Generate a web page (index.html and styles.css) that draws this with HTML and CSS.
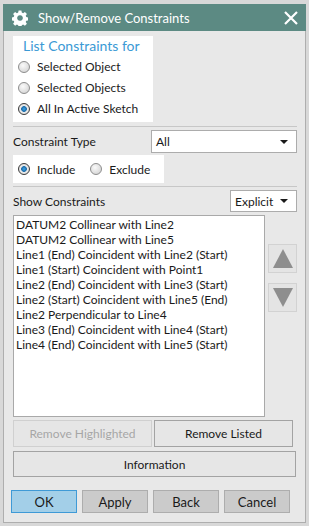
FILE: index.html
```html
<!DOCTYPE html>
<html>
<head lang="en">
    <meta charset="UTF-8">
    <title>Show/Remove Constraints</title>
    <link rel="stylesheet" href="styles.css">
</head>
<body>
<div class="frame">
    <div class="titlebar">
        <svg class="gear" width="16" height="16" viewBox="0 0 16 16">
            <path fill="#fff" fill-rule="evenodd" d="M6.6 0.5h2.8l0.4 2.1 1.3 0.6 1.8-1.2 2 2-1.2 1.8 0.6 1.3 2.1 0.4v2.8l-2.1 0.4-0.6 1.3 1.2 1.8-2 2-1.8-1.2-1.3 0.6-0.4 2.1h-2.8l-0.4-2.1-1.3-0.6-1.8 1.2-2-2 1.2-1.8-0.6-1.3-2.1-0.4v-2.8l2.1-0.4 0.6-1.3-1.2-1.8 2-2 1.8 1.2 1.3-0.6z M8 5.2a2.8 2.8 0 1 0 0.01 0z"/>
        </svg>
        <span class="title">Show/Remove Constraints</span>
        <svg class="close" width="14" height="14" viewBox="0 0 14 14">
            <path d="M1 1L13 13M13 1L1 13" stroke="#fff" stroke-width="2.2"/>
        </svg>
    </div>
    <div class="content">
        <div class="group">
            <div class="group-title">List Constraints for</div>
            <label class="radio-row"><span class="radio"></span>Selected Object</label>
            <label class="radio-row"><span class="radio"></span>Selected Objects</label>
            <label class="radio-row"><span class="radio checked"></span>All In Active Sketch</label>
        </div>
        <div class="sep"></div>
        <div class="field-row">
            <span>Constraint Type</span>
            <div class="select select-type">All<span class="caret"></span></div>
        </div>
        <div class="toggle-box">
            <label class="radio-row"><span class="radio checked"></span>Include</label>
            <label class="radio-row"><span class="radio"></span>Exclude</label>
        </div>
        <div class="sep sep-2"></div>
        <div class="field-row show-row">
            <span>Show Constraints</span>
            <div class="select select-show">Explicit<span class="caret"></span></div>
        </div>
        <div class="list-row">
            <div class="listbox">
                <div>DATUM2 Collinear with Line2</div>
                <div>DATUM2 Collinear with Line5</div>
                <div>Line1 (End) Coincident with Line2 (Start)</div>
                <div>Line1 (Start) Coincident with Point1</div>
                <div>Line2 (End) Coincident with Line3 (Start)</div>
                <div>Line2 (Start) Coincident with Line5 (End)</div>
                <div>Line2 Perpendicular to Line4</div>
                <div>Line3 (End) Coincident with Line4 (Start)</div>
                <div>Line4 (End) Coincident with Line5 (Start)</div>
            </div>
            <div class="arrows">
                <div class="arrow-btn"><span class="tri-up"></span></div>
                <div class="arrow-btn"><span class="tri-down"></span></div>
            </div>
        </div>
        <div class="remove-row">
            <div class="btn btn-disabled">Remove Highlighted</div>
            <div class="btn">Remove Listed</div>
        </div>
        <div class="btn btn-info">Information</div>
        <div class="bottom-row">
            <div class="btn-bottom btn-ok">OK</div>
            <div class="btn-bottom">Apply</div>
            <div class="btn-bottom">Back</div>
            <div class="btn-bottom">Cancel</div>
        </div>
    </div>
</div>
</body>
</html>
```
FILE: styles.css
```css
body {
    margin: 0;
    background: #d8d8d8;
    font-family: "Lato", "Liberation Sans", sans-serif;
    font-size: 12px;
    color: #1a1a1a;
}
.frame {
    width: 309px;
    height: 526px;
    box-sizing: border-box;
    padding: 4px 3px 3px 3px;
    background: #d8d8d8;
}
.titlebar {
    height: 27px;
    background: #5c8a83;
    display: flex;
    align-items: center;
    color: white;
}
.gear {
    margin-left: 9px;
}
.title {
    margin-left: 10px;
    font-size: 13px;
    flex: 1;
}
.close {
    margin-right: 8px;
}
.content {
    height: 492px;
    box-sizing: border-box;
    background: #e8e8e8;
    border: 1px solid #aeaeae;
    border-top: none;
    padding: 5px 8px 0 9px;
}
.group {
    width: 140px;
    height: 86px;
    box-sizing: border-box;
    background: white;
    padding: 0 0 2px 5px;
}
.group-title {
    height: 20px;
    line-height: 20px;
    color: #3b9ad5;
    font-size: 14px;
    padding-left: 5px;
}
.radio-row {
    display: flex;
    align-items: center;
    height: 21px;
}
.radio {
    width: 10px;
    height: 10px;
    border: 1px solid #8d8d8d;
    border-radius: 50%;
    background: radial-gradient(circle at 40% 35%, #fafafa 0, #d6d6d6 80%);
    margin-right: 7px;
}
.radio.checked {
    border-color: #3b3b3b;
    background: radial-gradient(circle, #3fa6e8 0, #1a6aa8 2.5px, #ececec 3.2px, #d0d0d0 100%);
}
.sep {
    height: 1px;
    background: #c7c7c7;
    margin: 4px 0 3px 0;
}
.field-row {
    display: flex;
    align-items: center;
    justify-content: space-between;
    height: 23px;
}
.select {
    box-sizing: border-box;
    height: 23px;
    background: white;
    border: 1px solid #acacac;
    display: flex;
    align-items: center;
    justify-content: space-between;
    padding: 0 8px 0 4px;
}
.select-type {
    width: 146px;
}
.select-show {
    width: 67px;
    height: 22px;
}
.caret {
    width: 0;
    height: 0;
    border-left: 4px solid transparent;
    border-right: 4px solid transparent;
    border-top: 4px solid #1a1a1a;
}
.toggle-box {
    margin-top: 2px;
    width: 151px;
    height: 28px;
    box-sizing: border-box;
    background: white;
    display: flex;
    align-items: center;
    padding-left: 5px;
    gap: 15px;
}
.sep-2 {
    margin-top: 3px;
}
.show-row {
    height: 22px;
}
.list-row {
    margin-top: 3px;
    display: flex;
    justify-content: space-between;
}
.listbox {
    width: 252px;
    height: 202px;
    box-sizing: border-box;
    background: white;
    border: 1px solid #a9a9a9;
    padding: 1px 2px;
    line-height: 15px;
}
.arrows {
    padding-top: 29px;
    display: flex;
    flex-direction: column;
    gap: 10px;
}
.arrow-btn {
    width: 29px;
    height: 29px;
    box-sizing: border-box;
    border: 1px solid #d2d2d2;
    background: #e4e4e4;
    display: flex;
    align-items: center;
    justify-content: center;
}
.tri-up {
    border-left: 10px solid transparent;
    border-right: 10px solid transparent;
    border-bottom: 19px solid #8e8e8e;
}
.tri-down {
    border-left: 10px solid transparent;
    border-right: 10px solid transparent;
    border-top: 19px solid #8e8e8e;
}
.remove-row {
    margin-top: 3px;
    display: flex;
    gap: 2px;
}
.btn {
    width: 139px;
    height: 27px;
    box-sizing: border-box;
    border: 1px solid #a3a3a3;
    background: #e6e6e6;
    display: flex;
    align-items: center;
    justify-content: center;
}
.btn-disabled {
    border-color: #d0d0d0;
    color: #a6a6a6;
}
.btn-info {
    margin-top: 4px;
    width: 283px;
    height: 26px;
}
.bottom-row {
    margin: 13px 0 0 -2px;
    display: flex;
    gap: 5px;
}
.btn-bottom {
    width: 66px;
    height: 23px;
    box-sizing: border-box;
    border: 1px solid #adadad;
    background: #cbcbcb;
    display: flex;
    align-items: center;
    justify-content: center;
    font-size: 13px;
}
.btn-ok {
    background: #a3cfe8;
    border-color: #3f9ad6;
}
```
